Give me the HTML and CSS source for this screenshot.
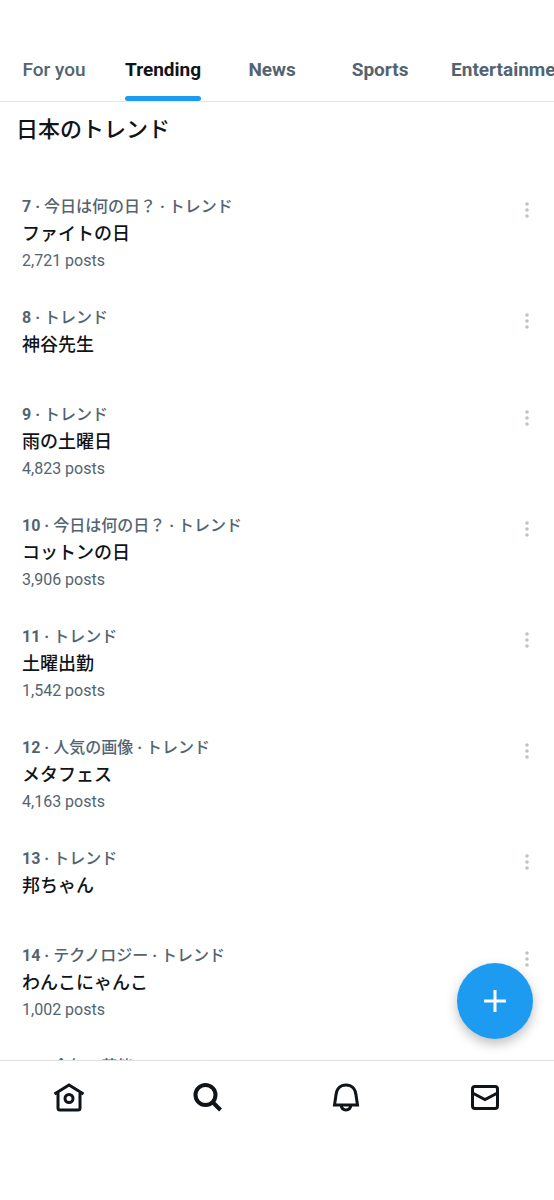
FILE: index.html
```html
<!DOCTYPE html>
<html lang="ja">
<head>
<meta charset="utf-8">
<meta name="viewport" content="width=device-width, initial-scale=1">
<title>Trending</title>
<link rel="stylesheet" href="styles.css">
</head>
<body class="app">
<header class="top">
  <nav class="tabs" aria-label="Explore">
    <a class="tab tab-soft" href="#for-you"><span class="tab-label">For you</span></a>
    <a class="tab tab-active" href="#trending" aria-current="page"><span class="tab-label">Trending</span></a>
    <a class="tab" href="#news"><span class="tab-label">News</span></a>
    <a class="tab" href="#sports"><span class="tab-label">Sports</span></a>
    <a class="tab" href="#entertainment"><span class="tab-label">Entertainment</span></a>
  </nav>
</header>
<div class="content">
  <main class="feed">
    <h1 class="heading">日本のトレンド</h1>
    <ol class="trends">
      <li class="trend"><div class="info"><p class="meta"><b class="rank">7 ·</b> 今日は何の日？ <b>·</b> トレンド</p><h2 class="name">ファイトの日</h2><p class="count">2,721 posts</p></div><button class="more" aria-label="More"><svg class="dots" viewBox="0 0 6 18"><circle cx="3" cy="3" r="1.800"/><circle cx="3" cy="9" r="1.800"/><circle cx="3" cy="15" r="1.800"/></svg></button></li>
      <li class="trend"><div class="info"><p class="meta"><b class="rank">8 ·</b> トレンド</p><h2 class="name">神谷先生</h2></div><button class="more" aria-label="More"><svg class="dots" viewBox="0 0 6 18"><circle cx="3" cy="3" r="1.800"/><circle cx="3" cy="9" r="1.800"/><circle cx="3" cy="15" r="1.800"/></svg></button></li>
      <li class="trend"><div class="info"><p class="meta"><b class="rank">9 ·</b> トレンド</p><h2 class="name">雨の土曜日</h2><p class="count">4,823 posts</p></div><button class="more" aria-label="More"><svg class="dots" viewBox="0 0 6 18"><circle cx="3" cy="3" r="1.800"/><circle cx="3" cy="9" r="1.800"/><circle cx="3" cy="15" r="1.800"/></svg></button></li>
      <li class="trend"><div class="info"><p class="meta"><b class="rank">10 ·</b> 今日は何の日？ <b>·</b> トレンド</p><h2 class="name">コットンの日</h2><p class="count">3,906 posts</p></div><button class="more" aria-label="More"><svg class="dots" viewBox="0 0 6 18"><circle cx="3" cy="3" r="1.800"/><circle cx="3" cy="9" r="1.800"/><circle cx="3" cy="15" r="1.800"/></svg></button></li>
      <li class="trend"><div class="info"><p class="meta"><b class="rank">11 ·</b> トレンド</p><h2 class="name">土曜出勤</h2><p class="count">1,542 posts</p></div><button class="more" aria-label="More"><svg class="dots" viewBox="0 0 6 18"><circle cx="3" cy="3" r="1.800"/><circle cx="3" cy="9" r="1.800"/><circle cx="3" cy="15" r="1.800"/></svg></button></li>
      <li class="trend"><div class="info"><p class="meta"><b class="rank">12 ·</b> 人気の画像 <b>·</b> トレンド</p><h2 class="name">メタフェス</h2><p class="count">4,163 posts</p></div><button class="more" aria-label="More"><svg class="dots" viewBox="0 0 6 18"><circle cx="3" cy="3" r="1.800"/><circle cx="3" cy="9" r="1.800"/><circle cx="3" cy="15" r="1.800"/></svg></button></li>
      <li class="trend"><div class="info"><p class="meta"><b class="rank">13 ·</b> トレンド</p><h2 class="name">邦ちゃん</h2></div><button class="more" aria-label="More"><svg class="dots" viewBox="0 0 6 18"><circle cx="3" cy="3" r="1.800"/><circle cx="3" cy="9" r="1.800"/><circle cx="3" cy="15" r="1.800"/></svg></button></li>
      <li class="trend"><div class="info"><p class="meta"><b class="rank">14 ·</b> テクノロジー <b>·</b> トレンド</p><h2 class="name">わんこにゃんこ</h2><p class="count">1,002 posts</p></div><button class="more" aria-label="More"><svg class="dots" viewBox="0 0 6 18"><circle cx="3" cy="3" r="1.800"/><circle cx="3" cy="9" r="1.800"/><circle cx="3" cy="15" r="1.800"/></svg></button></li>
      <li class="trend"><div class="info"><p class="meta"><b class="rank">15 ·</b> 今年の芸能 <b>·</b> トレンド</p></div></li>
    </ol>
  </main>
  <button class="compose" aria-label="New post"><svg class="plus" viewBox="0 0 24 24"><path d="M12 1v22M1 12h22"/></svg></button>
</div>
<nav class="bottom" aria-label="Main">
  <a class="nav-item" href="#home" aria-label="Home"><svg class="icon" viewBox="0 0 32 32"><path d="M5 12v15q0 2 2 2h18q2 0 2-2V12M1.500 13 16 4l14.500 9" /><circle cx="16" cy="17.500" r="4"/></svg></a>
  <a class="nav-item" href="#search" aria-label="Search" aria-current="page"><svg class="icon icon-bold" viewBox="0 0 32 32"><circle cx="13.500" cy="14" r="10"/><path d="m20.500 21 8 8"/></svg></a>
  <a class="nav-item" href="#notifications" aria-label="Notifications"><svg class="icon" viewBox="0 0 32 32"><path d="M4.500 24 6 14C6.500 7.500 10.500 4 16 4s9.500 3.500 10 10l1.500 10zM11 24c.5 3 2.500 5 5 5s4.500-2 5-5"/></svg></a>
  <a class="nav-item" href="#messages" aria-label="Messages"><svg class="icon" viewBox="0 0 32 32"><rect x="3.500" y="5.500" width="25" height="22" rx="2.500"/><path d="m3.500 12 12.500 6.500L28.500 12"/></svg></a>
</nav>
</body>
</html>
```
FILE: styles.css
```css
* {
  box-sizing: border-box;
}

.app {
  margin: 0;
  height: 100vh;
  display: flex;
  flex-direction: column;
  overflow: hidden;
  background: #fff;
  color: #0f1419;
  font-family: Roboto, "Noto Sans CJK JP", sans-serif;
}

.top {
  padding-top: 40px;
  border-bottom: 1px solid #e1e8ec;
}

.tabs {
  display: flex;
  overflow: hidden;
}

.tab {
  flex: none;
  min-width: 108px;
  padding: 0 17px;
  display: flex;
  justify-content: center;
  color: #536471;
  font-size: 19px;
  font-weight: 700;
  text-decoration: none;
}

.tab-soft {
  font-weight: 500;
}

.tab-label {
  height: 61px;
  line-height: 60px;
}

.tab-active {
  color: #0f1419;
}

.tab-active .tab-label {
  position: relative;
}

.tab-active .tab-label::after {
  content: "";
  position: absolute;
  left: 0;
  right: 0;
  bottom: 0;
  height: 5px;
  border-radius: 3px;
  background: #1d9bf0;
}

.content {
  flex: 1;
  min-height: 0;
  position: relative;
}

.feed {
  height: 100%;
  overflow-y: auto;
  scrollbar-width: none;
}

.heading {
  margin: 0;
  padding: 12px 16px 32px;
  font-size: 22px;
  font-weight: 500;
  line-height: 32px;
}

.trends {
  margin: 0;
  padding: 0;
  list-style: none;
}

.trend {
  min-height: 97px;
  padding: 16px 18px 15px 22px;
  display: flex;
  justify-content: space-between;
  align-items: flex-start;
}

.meta,
.name,
.count {
  margin: 0;
  line-height: 27px;
}

.meta {
  color: #536471;
  font-size: 16px;
  font-weight: 500;
  line-height: 26px;
}

.rank {
  font-weight: 700;
}

.name {
  font-size: 18px;
  font-weight: 500;
}

.count {
  color: #536471;
  font-size: 16px;
}

.more {
  width: 18px;
  height: 32px;
  padding: 0;
  display: flex;
  align-items: center;
  justify-content: center;
  border: 0;
  background: none;
}

.dots {
  width: 6px;
  height: 18px;
  fill: #b9c4cb;
}

.compose {
  position: absolute;
  right: 21px;
  bottom: 21px;
  width: 76px;
  height: 76px;
  padding: 0;
  display: flex;
  align-items: center;
  justify-content: center;
  border: 0;
  border-radius: 50%;
  background: #1d9bf0;
  box-shadow: 0 5px 12px rgba(0, 0, 0, 0.25);
}

.plus {
  width: 24px;
  height: 24px;
  fill: none;
  stroke: #fff;
  stroke-width: 3;
}

.bottom {
  display: grid;
  grid-template-columns: repeat(4, 1fr);
  padding-bottom: 67px;
  border-top: 1px solid #dfe3e6;
}

.nav-item {
  height: 72px;
  display: flex;
  align-items: center;
  justify-content: center;
  color: #0f1419;
}

.icon {
  width: 32px;
  height: 32px;
  fill: none;
  stroke: currentColor;
  stroke-width: 3;
}

.icon-bold {
  stroke-width: 4;
}
```
